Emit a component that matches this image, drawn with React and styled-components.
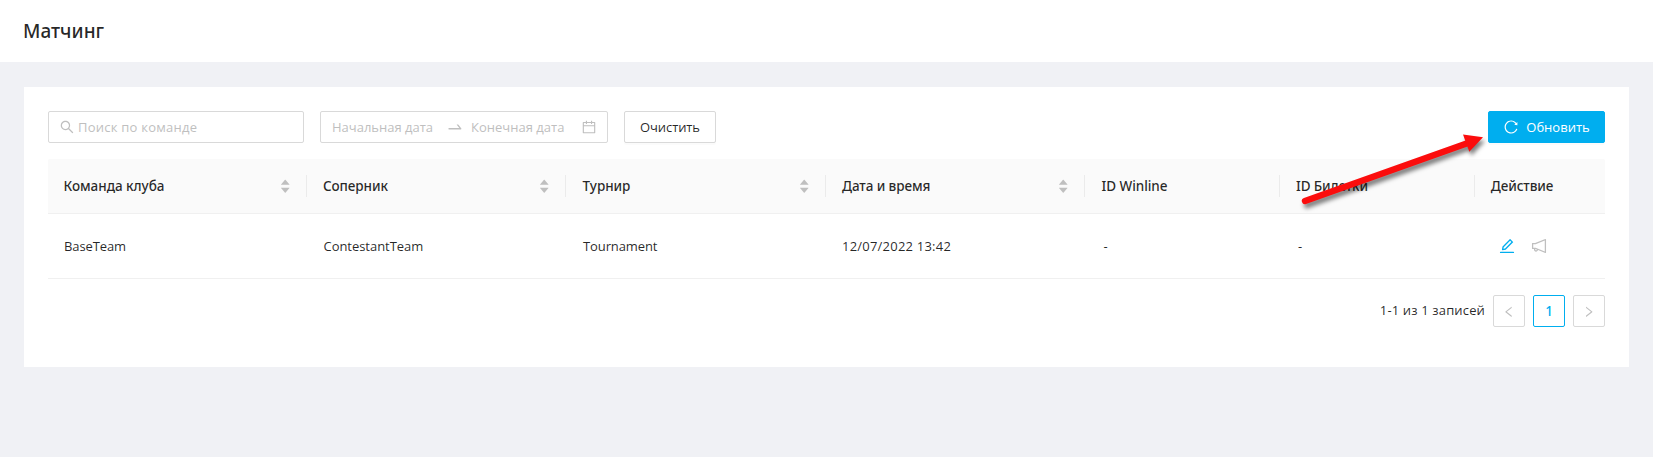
import React from 'react';
import styled, { createGlobalStyle } from 'styled-components';
import {
  AiOutlineSearch,
  AiOutlineSwapRight,
  AiOutlineCalendar,
  AiOutlineReload,
  AiOutlineEdit,
  AiOutlineNotification,
  AiOutlineLeft,
  AiOutlineRight,
  AiFillCaretUp,
  AiFillCaretDown,
} from 'react-icons/ai';

const GlobalStyle = createGlobalStyle`
  * { box-sizing: border-box; }
  body {
    margin: 0;
    background: #f0f1f5;
    color: rgba(0, 0, 0, 0.85);
    font: 13px/22px "Open Sans", "Noto Sans", sans-serif;
  }
  svg { display: block; flex: none; }
`;

const Page = styled.div`
  min-height: 100vh;
`;

const Header = styled.header`
  display: flex;
  align-items: center;
  height: 62px;
  padding: 0 23px;
  background: #fff;
`;

const Title = styled.h1`
  margin: 0;
  font: 500 19px/32px "Noto Sans", sans-serif;
`;

const Card = styled.main`
  position: relative;
  height: 280px;
  margin: 25px 24px 0;
  padding: 24px;
  background: #fff;
`;

const Toolbar = styled.div`
  display: flex;
  gap: 16px;
  height: 32px;
  margin-bottom: 16px;
`;

const Text = styled.span`
  letter-spacing: ${(p) => p.$spacing || 0}px;
  white-space: nowrap;
`;

const Field = styled.div`
  display: flex;
  align-items: center;
  width: ${(p) => p.$width}px;
  padding: 0 11px;
  border: 1px solid #d9d9d9;
  border-radius: 2px;
  color: #bfbfbf;
`;

const SearchIcon = styled(AiOutlineSearch)`
  margin: 0 3px 0 -1px;
`;

const DateText = styled(Text)`
  width: ${(p) => p.$width}px;
`;

const RangeArrow = styled(AiOutlineSwapRight)`
  margin-right: 7px;
`;

const RangeCalendar = styled(AiOutlineCalendar)`
  margin: 0 -1px 0 auto;
`;

const Button = styled.button`
  display: flex;
  align-items: center;
  justify-content: center;
  gap: 7px;
  width: ${(p) => p.$width}px;
  padding: 0;
  border: 1px solid ${(p) => (p.$primary ? '#00aeef' : '#d9d9d9')};
  border-radius: 2px;
  background: ${(p) => (p.$primary ? '#00aeef' : '#fff')};
  color: ${(p) => (p.$primary ? '#fff' : 'rgba(0, 0, 0, 0.85)')};
  box-shadow: 0 2px 0 rgba(0, 0, 0, 0.016);
  margin-left: ${(p) => (p.$primary ? 'auto' : 0)};
  font: inherit;
`;

const Row = styled.div`
  display: grid;
  grid-template-columns: repeat(4, 240fr) repeat(2, 180fr) 120fr;
  align-items: center;
  border-bottom: 1px solid #f0f0f0;
`;

const HeadRow = styled(Row)`
  height: 55px;
  background: #fafafa;
  border-radius: 2px 2px 0 0;
  font: 500 13.5px/22px "Noto Sans", sans-serif;
`;

const BodyRow = styled(Row)`
  height: 65px;
`;

const HeadCell = styled.div`
  display: flex;
  align-items: center;
  justify-content: space-between;
  height: 22px;
  margin-right: 0.6px;
  padding: 0 14.5px 0 15.5px;
  border-right: 1px solid #ebebeb;
  &:last-child { border-right: 0; }
`;

const Sorter = styled.span`
  display: flex;
  flex-direction: column;
  color: #bfbfbf;
  svg + svg { margin-top: -5px; }
`;

const Cell = styled.div`
  display: flex;
  align-items: center;
  gap: 14px;
  padding-left: ${(p) => p.$indent || 16}px;
`;

const EditIcon = styled(AiOutlineEdit)`
  color: #00aeef;
`;

const NotifyIcon = styled(AiOutlineNotification)`
  color: #bfbfbf;
`;

const Pagination = styled.nav`
  display: flex;
  justify-content: flex-end;
  gap: 8px;
  margin-top: 16px;
`;

const Total = styled(Text)`
  line-height: 31px;
`;

const PageItem = styled.span`
  display: flex;
  align-items: center;
  justify-content: center;
  width: 32px;
  height: 32px;
  border: 1px solid ${(p) => (p.$active ? '#00aeef' : '#d9d9d9')};
  border-radius: 2px;
  color: ${(p) => (p.$active ? '#00aeef' : '#bfbfbf')};
  font: 500 13.5px/30px "Noto Sans", sans-serif;
  svg { transform: translateY(1px); }
`;

const Pointer = styled.svg`
  position: absolute;
  top: 34px;
  right: 139px;
  filter: drop-shadow(2px 4px 2px rgba(0, 0, 0, 0.5));
`;

const columns = [
  { title: 'Команда клуба', spacing: -0.03, sortable: true },
  { title: 'Соперник', spacing: -0.1, sortable: true },
  { title: 'Турнир', spacing: -0.05, sortable: true },
  { title: 'Дата и время', spacing: -0.1, sortable: true },
  { title: 'ID Winline', spacing: -0.05 },
  { title: 'ID Билетки', spacing: -0.15 },
  { title: 'Действие', spacing: -0.1 },
];

const cells = [
  { text: 'BaseTeam', spacing: -0.1 },
  { text: 'ContestantTeam', spacing: -0.04 },
  { text: 'Tournament', spacing: -0.1 },
  { text: '12/07/2022 13:42', spacing: 0.22, indent: 15.5 },
  { text: '-', indent: 17.5 },
  { text: '-', indent: 17.5 },
];

export default function App() {
  return (
    <Page>
      <GlobalStyle />
      <Header>
        <Title>Матчинг</Title>
      </Header>
      <Card>
        <Toolbar>
          <Field $width={256}>
            <SearchIcon size={16} />
            <Text $spacing={0.24}>Поиск по команде</Text>
          </Field>
          <Field $width={288}>
            <DateText $width={114} $spacing={0}>Начальная дата</DateText>
            <RangeArrow size={18} />
            <Text $spacing={0.02}>Конечная дата</Text>
            <RangeCalendar size={16} />
          </Field>
          <Button $width={92}>
            <Text $spacing={-0.1}>Очистить</Text>
          </Button>
          <Button $primary $width={117}>
            <AiOutlineReload size={16} />
            <Text>Обновить</Text>
          </Button>
        </Toolbar>
        <HeadRow>
          {columns.map((c) => (
            <HeadCell key={c.title}>
              <Text $spacing={c.spacing}>{c.title}</Text>
              {c.sortable && (
                <Sorter>
                  <AiFillCaretUp size={12.5} />
                  <AiFillCaretDown size={12.5} />
                </Sorter>
              )}
            </HeadCell>
          ))}
        </HeadRow>
        <BodyRow>
          {cells.map((c, i) => (
            <Cell key={i} $indent={c.indent}>
              <Text $spacing={c.spacing}>{c.text}</Text>
            </Cell>
          ))}
          <Cell $indent={22.5}>
            <EditIcon size={18} />
            <NotifyIcon size={18} />
          </Cell>
        </BodyRow>
        <Pagination>
          <Total $spacing={0.15}>1-1 из 1 записей</Total>
          <PageItem><AiOutlineLeft size={13.7} /></PageItem>
          <PageItem $active>1</PageItem>
          <PageItem><AiOutlineRight size={13.7} /></PageItem>
        </Pagination>
        <Pointer width="200" height="90" viewBox="1290 121 200 90">
          <path d="M1305 201 L1468 143" stroke="#fb0d0d" strokeWidth="6.4" strokeLinecap="round" />
          <path d="M1463 134.5 L1483 137.3 L1469.3 151.8 Z" fill="#fb0d0d" />
        </Pointer>
      </Card>
    </Page>
  );
}
